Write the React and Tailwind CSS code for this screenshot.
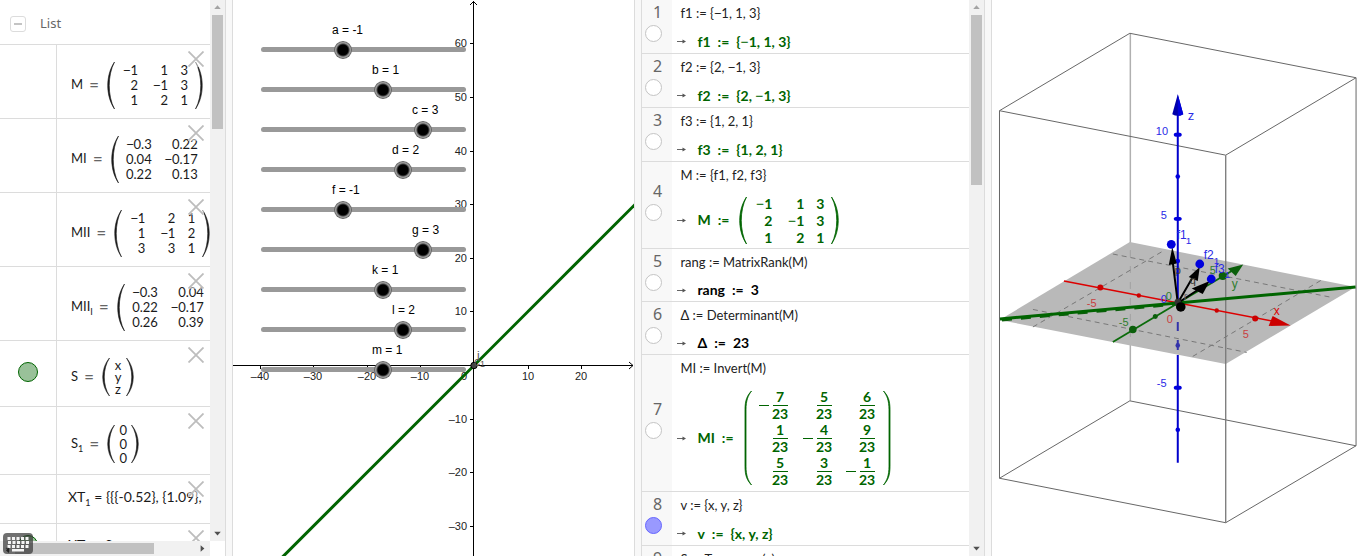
import React, { useState } from "react";

const MATH = "font-['Lato','Noto_Sans',sans-serif]";

/* ---------- shared pieces ---------- */

/* Sets minus signs in the wide form that formulas use. */
function Tex({ children }) {
  return String(children)
    .split(/([−])/)
    .map((part, i) =>
      part === "−" ? (
        <span key={i} className="font-['Noto_Sans',sans-serif] font-normal">
          {part}
        </span>
      ) : (
        part
      )
    );
}

function Paren({ side, height, thick, tall }) {
  const left = tall
    ? "M7.5 0 C3 5 1 10 1 20 V80 C1 90 3 95 7.5 100 C4 95 2 90 2 80 V20 C2 10 4 5 7.5 0 Z"
    : "M7.5 0 C-1.5 28 -1.5 72 7.5 100 C0.5 72 0.5 28 7.5 0 Z";
  return (
    <svg
      aria-hidden="true"
      viewBox="0 0 8 100"
      preserveAspectRatio="none"
      className={`w-2 shrink-0 overflow-visible ${height}`}
    >
      <path
        d={left}
        transform={side === "left" ? undefined : "matrix(-1 0 0 1 8 0)"}
        fill="currentColor"
        stroke="currentColor"
        strokeWidth={thick ? 0.8 : 0.6}
        vectorEffect="non-scaling-stroke"
      />
    </svg>
  );
}

function Matrix({
  rows,
  cols,
  row = "leading-[15px]",
  pad = "pr-[7px]",
  align = "text-right",
  height = "h-[47px]",
  thick,
  tall,
}) {
  return (
    <div className={`flex items-center ${thick ? "pl-[3px]" : ""}`}>
      <Paren side="left" height={height} thick={thick} tall={tall} />
      <div className={`grid ${cols} ${row} ${pad} ${align}`}>
        {rows.flat().map((cell, i) => (
          <span key={i}>{typeof cell === "string" ? <Tex>{cell}</Tex> : cell}</span>
        ))}
      </div>
      <Paren side="right" height={height} thick={thick} tall={tall} />
    </div>
  );
}

function Fraction({ num, den, negative }) {
  return (
    <span className="flex h-[33px] items-center justify-end gap-1">
      {negative && <span className="h-px w-[10px] bg-[#006400]" />}
      <span className="flex w-[15px] flex-col items-center">
        <span className="leading-4">{num}</span>
        <span className="h-px w-full bg-[#006400]" />
        <span className="leading-4">{den}</span>
      </span>
    </span>
  );
}

function Triangle({ dir, dark }) {
  const paths = {
    up: "M4.5 9.5 L8 5.5 L11.5 9.5 Z",
    down: "M4.5 6 L8 10 L11.5 6 Z",
    left: "M10 4.5 L6 8 L10 11.5 Z",
    right: "M6 4.5 L10 8 L6 11.5 Z",
  };
  return (
    <svg viewBox="0 0 16 16" aria-hidden="true" className="size-[15px]">
      <path d={paths[dir]} fill={dark ? "#505050" : "#a3a3a3"} />
    </svg>
  );
}

function VerticalScrollbar({ thumb }) {
  return (
    <div className="flex w-[15px] shrink-0 flex-col items-center bg-[#f1f1f1]">
      <button type="button" aria-label="Scroll up" className="h-[15px]">
        <Triangle dir="up" />
      </button>
      <div className="flex w-[11px] flex-1 flex-col">
        <div className={`${thumb} bg-[#c1c1c1]`} />
      </div>
      <button type="button" aria-label="Scroll down" className="h-[15px]">
        <Triangle dir="down" dark />
      </button>
    </div>
  );
}

/* ---------- algebra view ---------- */

function CloseButton() {
  return (
    <button type="button" aria-label="Delete" className="absolute top-[6px] right-[6px] bg-white/50">
      <svg viewBox="0 0 16 16" className="size-4" stroke="#bdbdbd" strokeWidth="1.8">
        <path d="M0.5 0.5 L15.5 15.5 M15.5 0.5 L0.5 15.5" />
      </svg>
    </button>
  );
}

function Sub({ children }) {
  return <span className="relative top-1 text-[9px]">{children}</span>;
}

function Definition({ name, children }) {
  return (
    <div className="flex items-center gap-[6px] pt-[7px] pl-[14px]">
      <span>{name}</span>
      <span className="w-[10px] text-center font-['Noto_Sans',sans-serif] text-base leading-4 text-[#666]">=</span>
      <div className="pl-[2px]">{children}</div>
    </div>
  );
}

const THREE = "grid-cols-[23px_30px_20px]";
const TWO = "grid-cols-[33px_46px]";

const algebraRows = [
  {
    id: "M",
    height: "h-[74px]",
    body: (
      <Definition name="M">
        <Matrix cols={THREE} rows={[["−1", "1", "3"], ["2", "−1", "3"], ["1", "2", "1"]]} />
      </Definition>
    ),
  },
  {
    id: "MI",
    height: "h-[74px]",
    body: (
      <Definition name="MI">
        <Matrix cols={TWO} pad="pr-4" rows={[["−0.3", "0.22"], ["0.04", "−0.17"], ["0.22", "0.13"]]} />
      </Definition>
    ),
  },
  {
    id: "MII",
    height: "h-[74px]",
    body: (
      <Definition name="MII">
        <Matrix cols={THREE} rows={[["−1", "2", "1"], ["1", "−1", "2"], ["3", "3", "1"]]} />
      </Definition>
    ),
  },
  {
    id: "MIII",
    height: "h-[74px]",
    body: (
      <Definition name={<>MII<Sub>I</Sub></>}>
        <Matrix cols={TWO} pad="pr-4" rows={[["−0.3", "0.04"], ["0.22", "−0.17"], ["0.26", "0.39"]]} />
      </Definition>
    ),
  },
  {
    id: "S",
    height: "h-[66px]",
    marble: true,
    body: (
      <Definition name="S">
        <Matrix
          cols="grid-cols-[16px]"
          row="leading-[12px]"
          pad=""
          align="text-center"
          height="h-[38px]"
          rows={[["x"], ["y"], ["z"]]}
        />
      </Definition>
    ),
  },
  {
    id: "S1",
    height: "h-[68px]",
    body: (
      <Definition name={<>S<Sub>1</Sub></>}>
        <Matrix
          cols="grid-cols-[16px]"
          row="leading-[14px]"
          pad=""
          align="text-center"
          height="h-[38px]"
          rows={[["0"], ["0"], ["0"]]}
        />
      </Definition>
    ),
  },
  {
    id: "XT1",
    height: "h-[49px]",
    body: (
      <div className="pb-1 pl-[11px] text-sm whitespace-nowrap">
        XT<Sub>1</Sub> = {"{{{-0.52}, {1.09},"}
      </div>
    ),
  },
  {
    id: "XT2",
    height: "h-[46px]",
    marble: true,
    body: (
      <div className="pb-1 pl-[11px] text-sm whitespace-nowrap">
        XT<Sub>2</Sub> = ?
      </div>
    ),
  },
];

function KeyboardButton() {
  const keys = [];
  for (let r = 0; r < 3; r++) for (let c = 0; c < 5; c++) keys.push([4.5 + c * 4.5 + (r === 1 ? 0.5 : 0), 4 + r * 4]);
  return (
    <button
      type="button"
      aria-label="Show keyboard"
      className="absolute bottom-[2px] left-[3px] rounded-[4px] bg-[#333]/70"
    >
      <svg viewBox="0 0 30 21" className="h-[21px] w-[30px]" fill="#f4f4f4">
        {keys.map(([x, y], i) => (
          <rect key={i} x={x} y={y} width="3" height="3" />
        ))}
        <rect x="9" y="16" width="12" height="2.5" />
        <path d="M6 14.5 L3 17.5 L6 20 Z" fill="#222" />
      </svg>
    </button>
  );
}

function AlgebraView() {
  return (
    <section className="relative flex w-[226px] shrink-0 border-r border-[#dcdcdc]">
      <div className="flex min-w-0 flex-1 flex-col">
        <div className="min-h-0 flex-1 overflow-hidden">
          <header className="flex h-[45px] items-center gap-[14px] border-b border-[#dcdcdc] pt-1 pl-[10px] font-['Noto_Sans','Open_Sans',sans-serif] text-[13px] text-[#666]">
            <button
              type="button"
              aria-label="Collapse list"
              className="flex size-4 items-center justify-center rounded-[3px] border border-[#dcdcdc]"
            >
              <span className="h-[2px] w-2 bg-[#c4c4c4]" />
            </button>
            <span>List</span>
          </header>
          {algebraRows.map((row) => (
            <div key={row.id} className={`flex border-b border-[#dcdcdc] ${row.height}`}>
              <div className="flex w-[57px] shrink-0 items-center justify-center border-r border-[#dcdcdc] pb-[3px]">
                {row.marble && (
                  <button
                    type="button"
                    aria-label="Toggle visibility"
                    className="size-5 rounded-full border border-[#006400] bg-[#99c199]"
                  />
                )}
              </div>
              <div
                className={`relative flex min-w-0 flex-1 items-center overflow-hidden text-[13px] text-[#1a1a1a] ${MATH}`}
              >
                {row.body}
                <CloseButton />
              </div>
            </div>
          ))}
        </div>
        <div className="flex h-[15px] shrink-0 items-center bg-[#f1f1f1]">
          <button type="button" aria-label="Scroll left">
            <Triangle dir="left" dark />
          </button>
          <div className="flex h-[11px] flex-1">
            <div className="w-[139px] bg-[#c1c1c1]" />
          </div>
          <button type="button" aria-label="Scroll right">
            <Triangle dir="right" dark />
          </button>
        </div>
      </div>
      <div className="flex pb-[15px]">
        <VerticalScrollbar thumb="h-[114px]" />
      </div>
      <KeyboardButton />
    </section>
  );
}

/* ---------- graphics view ---------- */

const sliderData = [
  ["a", -1],
  ["b", 1],
  ["c", 3],
  ["d", 2],
  ["f", -1],
  ["g", 3],
  ["k", 1],
  ["l", 2],
  ["m", 1],
];

function Slider({ name, start }) {
  const [value, setValue] = useState(start);
  const id = `slider-${name}`;
  return (
    <div className="flex h-10 w-[218px] flex-col gap-[2px]">
      <label
        htmlFor={id}
        className="leading-4 whitespace-nowrap"
        style={{ paddingLeft: -2 + (value + 5) * 20 }}
      >
        {name} = {value}
      </label>
      <div className="grid h-[19px] items-center">
        <span className="col-start-1 row-start-1 mr-[6px] ml-[7px] h-[5px] rounded-full bg-[#999]" />
        <input
          id={id}
          type="range"
          min="-5"
          max="5"
          step="1"
          value={value}
          onChange={(e) => setValue(Number(e.target.value))}
          className="z-10 col-start-1 row-start-1 m-0 h-[18px] w-full appearance-none bg-transparent [&::-webkit-slider-thumb]:size-[18px] [&::-webkit-slider-thumb]:appearance-none [&::-webkit-slider-thumb]:rounded-full [&::-webkit-slider-thumb]:bg-[radial-gradient(circle,#000_0,#000_5px,#444_6px,#999_7px,#999_7.5px,#666_8.5px,#777_9px)]"
        />
      </div>
    </div>
  );
}

function GraphicsView() {
  const xTicks = [-40, -30, -20, -10, 10, 20];
  const yTicks = [60, 50, 40, 30, 20, 10, -10, -20, -30];
  const text = (n) => String(n).replace("-", "–");
  return (
    <section className="relative min-w-0 grow-[403] basis-0 overflow-hidden border-x border-[#dcdcdc] font-['Liberation_Sans',Arial,sans-serif]">
      <svg className="absolute inset-0 size-full" aria-label="Plot of the line through the origin">
        <g fontSize="11" fill="#222">
          <path d="M0 365.5 H400 M240.5 1 V2000" stroke="#000" />
          <path d="M237 5 L240.5 1.5 L244 5 M396 362 L400 365.5 L396 369" stroke="#000" fill="none" />
          {xTicks.map((n) => {
            const x = Math.round(241 + n * 5.36);
            return (
              <g key={n}>
                <path d={`M${x + 0.5} 365 v4`} stroke="#000" />
                <text x={x} y="380" textAnchor="middle">
                  {text(n)}
                </text>
              </g>
            );
          })}
          {yTicks.map((n) => {
            const y = Math.round(365 - n * 5.36);
            return (
              <g key={n}>
                <path d={`M237 ${y + 0.5} h4`} stroke="#000" />
                <text x="234" y={y + 4} textAnchor="end">
                  {text(n)}
                </text>
              </g>
            );
          })}
          <text x="234" y="380" textAnchor="end">
            0
          </text>
          <path d="M-9 615.5 L440.5 166" stroke="#006400" strokeWidth="3" />
          <circle cx="241" cy="365.5" r="3.2" fill="#444" stroke="#000" />
          <text x="241" y="366" fontSize="12" fill="#555">
            c
          </text>
          <text x="244" y="360" fontSize="12" fill="#555">
            i
          </text>
          <text x="247" y="367" fontSize="9" fill="#555">
            1
          </text>
        </g>
      </svg>
      <div className="relative flex w-fit flex-col pt-[22px] pl-[21px] text-xs text-black">
        {sliderData.map(([name, start]) => (
          <Slider key={name} name={name} start={start} />
        ))}
      </div>
    </section>
  );
}

/* ---------- CAS view ---------- */

const casRows = [
  { n: 1, height: "h-[54px]", input: "f1 := {−1, 1, 3}", name: "f1", output: "{−1, 1, 3}" },
  { n: 2, height: "h-[54px]", input: "f2 := {2, −1, 3}", name: "f2", output: "{2, −1, 3}" },
  { n: 3, height: "h-[54px]", input: "f3 := {1, 2, 1}", name: "f3", output: "{1, 2, 1}" },
  {
    n: 4,
    height: "h-[87px]",
    input: "M := {f1, f2, f3}",
    name: "M",
    output: (
      <Matrix
        thick
        cols="grid-cols-[25px_32px_20px]"
        row="leading-[17px]"
        rows={[["−1", "1", "3"], ["2", "−1", "3"], ["1", "2", "1"]]}
      />
    ),
  },
  { n: 5, height: "h-[53px]", input: "rang := MatrixRank(M)", name: "rang", output: "3", dark: true },
  { n: 6, height: "h-[53px]", input: "Δ := Determinant(M)", name: "Δ", output: "23", dark: true },
  {
    n: 7,
    height: "h-[137px]",
    input: "MI := Invert(M)",
    name: "MI",
    output: (
      <Matrix
        thick
        tall
        cols="grid-cols-[36px_44px_43px]"
        pad="pr-2"
        height="h-[94px]"
        rows={[
          [<Fraction negative num="7" den="23" />, <Fraction num="5" den="23" />, <Fraction num="6" den="23" />],
          [<Fraction num="1" den="23" />, <Fraction negative num="4" den="23" />, <Fraction num="9" den="23" />],
          [<Fraction num="5" den="23" />, <Fraction num="3" den="23" />, <Fraction negative num="1" den="23" />],
        ]}
      />
    ),
  },
  { n: 8, height: "h-[54px]", input: "v := {x, y, z}", name: "v", output: "{x, y, z}", active: true },
  { n: 9, height: "h-[54px]", input: "S := Transpose(v)", name: "S", output: "{x, y, z}" },
];

function CasView() {
  return (
    <section className="flex w-[344px] shrink-0 border-x border-[#dcdcdc]">
      <div className="min-w-0 flex-1 overflow-hidden">
        {casRows.map((row) => (
          <div key={row.n} className={`flex border-b border-[#dcdcdc] ${row.height}`}>
            <div className="flex w-[30px] shrink-0 flex-col items-center justify-center gap-[2px] bg-[#f8f8f8] pb-[10px]">
              <span className="font-['Noto_Sans','Open_Sans',sans-serif] text-base leading-[22px] text-[#666]">
                {row.n}
              </span>
              <button
                type="button"
                aria-label={`Toggle row ${row.n}`}
                className={`mr-[7px] size-[17px] rounded-full border ${
                  row.active ? "border-[#6666ff] bg-[#9999ff]" : "border-[#c4c4c4] bg-white"
                }`}
              />
            </div>
            <div className={`flex min-w-0 flex-1 flex-col whitespace-nowrap ${MATH}`}>
              <div className="pl-2 text-[13px] leading-[27px] text-[#222]">
                <Tex>{row.input}</Tex>
              </div>
              <div
                className={`flex flex-1 items-center pt-[3px] pl-[5px] text-[14px] leading-4 font-bold ${
                  row.dark ? "text-black" : "text-[#006400]"
                }`}
              >
                <svg viewBox="0 0 9 7" aria-hidden="true" className="h-[7px] w-[9px]">
                  <path d="M0 3.5 H7" stroke="#666" />
                  <path d="M5.5 1.5 L9 3.5 L5.5 5.5 Z" fill="#555" />
                </svg>
                <span className="pl-[11px]">{row.name}</span>
                <span className="px-[7px]">:=</span>
                {typeof row.output === "string" ? (
                  <span>
                    <Tex>{row.output}</Tex>
                  </span>
                ) : (
                  row.output
                )}
              </div>
            </div>
          </div>
        ))}
      </div>
      <VerticalScrollbar thumb="h-[170px]" />
    </section>
  );
}

/* ---------- 3D view ---------- */

function SpaceView() {
  return (
    <section className="min-w-0 grow-[375] basis-0 overflow-hidden border-l border-[#dcdcdc]">
      <svg
        viewBox="992 0 374 556"
        className="size-full font-['Liberation_Sans',Arial,sans-serif]"
        aria-label="Vectors and plane in space"
      >
        <path d="M1130.5 33 V401" stroke="#b0b0b0" strokeWidth="1.5" />
        <path d="M1130 242 L1356 287 L1226 364 L999.5 320 Z" fill="#b9b9b9" />
        <path d="M1130.5 250 V344" stroke="#a2a2a2" strokeDasharray="7 9" />

        <g stroke="#777" strokeDasharray="5 4">
          <path d="M1033 309.5 L1247 352.5 M1113 254 L1330 297 M1033 327 L1165 250 M1193 356.5 L1322 280" />
        </g>

        <g stroke="#666" fill="none">
          <path d="M1130 33 L1356.5 77.5 L1226 155 L999.5 110.5 Z" />
          <path d="M1130 401 L1356.5 446 L1226 523 L999.5 478.5 Z" />
          <path d="M999.5 110.5 V478.5 M1356.5 77.5 V446" />
          <path d="M1226 155 V523" stroke="#777" strokeWidth="1.3" />
        </g>

        {/* x axis */}
        <g fill="#cc0000">
          <path d="M1064 281 L1275 321.5" stroke="#dd0000" strokeWidth="1.5" />
          <path d="M1273 316 L1291 325.5 L1269 326 Z" />
          <circle cx="1100.5" cy="287.5" r="3" />
          <circle cx="1139" cy="295.5" r="2.2" />
          <circle cx="1217" cy="310.5" r="2.2" />
          <circle cx="1255.5" cy="318.5" r="3" />
        </g>

        {/* y axis */}
        <g fill="#0b5f0b">
          <path d="M1113 342 L1232 271" stroke="#0b6b0b" strokeWidth="1.8" />
          <path d="M1228 268.5 L1243.5 264.5 L1236 276 Z" />
          <circle cx="1133" cy="329.5" r="3.8" />
          <circle cx="1155.5" cy="316.5" r="2.5" />
          <circle cx="1223" cy="276" r="4" />
        </g>

        {/* line in the plane */}
        <path d="M1002 320 L1178 304" stroke="#0b5f0b" strokeWidth="3" strokeDasharray="10 9" />
        <path d="M1000 319 L1356 287" stroke="#006400" strokeWidth="3" />

        {/* z axis */}
        <g fill="#0000dd">
          <path d="M1178 112 V303 M1178 355 V463" stroke="#0000cc" strokeWidth="2" />
          <path d="M1178 322 V331 M1178 340 V350" stroke="#3333aa" strokeWidth="2" />
          <path d="M1178 94 L1183.5 114 Q1178 117 1172.5 114 Z" fill="#0000aa" />
          <path d="M1178 94 L1183.5 114 Q1180 116 1178 115.5 Z" />
          <ellipse cx="1178" cy="134.5" rx="4" ry="2.2" />
          <circle cx="1178" cy="176.5" r="2.3" />
          <ellipse cx="1178" cy="218.8" rx="4" ry="2.2" />
          <circle cx="1178" cy="261" r="2.3" />
          <circle cx="1178" cy="345.5" r="2.3" fill="#3333aa" />
          <ellipse cx="1178" cy="387.8" rx="4" ry="2.2" />
          <circle cx="1178" cy="430" r="2.3" />
        </g>

        {/* vectors */}
        <g stroke="#000" strokeWidth="2">
          <path d="M1178 303 L1172.5 258 M1178 303 L1196 272 M1178 303 L1204 286" />
        </g>
        <path d="M1169 265 L1177 263.5 L1172.5 247 Z" />
        <path d="M1189 277 L1198 281 L1200 267 Z" />
        <path d="M1192 288.5 L1203 294 L1210 281 Z" />
        <circle cx="1178" cy="302" r="3.2" fill="#333" />
        <circle cx="1181" cy="307" r="4.8" />
        <g fill="#0000dd">
          <circle cx="1171.5" cy="244.3" r="4.4" />
          <circle cx="1200" cy="264" r="4.4" />
          <circle cx="1211.5" cy="279" r="4.4" />
        </g>

        <g fontSize="11">
          <g fill="#2a2ae6">
            <text x="1188" y="120" fontSize="13">z</text>
            <text x="1156" y="135">10</text>
            <text x="1161" y="219">5</text>
            <text x="1157" y="387">-5</text>
            <text x="1161" y="303">0</text>
            <g fontSize="12">
              <text x="1177" y="239">f1</text>
              <text x="1186" y="244" fontSize="10">1</text>
              <text x="1204" y="259">f2</text>
              <text x="1214" y="264" fontSize="10">1</text>
              <text x="1215" y="273">f3</text>
              <text x="1225" y="278" fontSize="10">1</text>
            </g>
          </g>
          <g fill="#c84040">
            <text x="1087" y="307">-5</text>
            <text x="1167" y="323">0</text>
            <text x="1243" y="338">5</text>
            <text x="1274" y="315" fontSize="12" fill="#dd0000">x</text>
          </g>
          <g fill="#2e7d2e">
            <text x="1119" y="326">-5</text>
            <text x="1210" y="274">5</text>
            <text x="1166" y="300">0</text>
            <text x="1232" y="288" fontSize="12">y</text>
          </g>
          <g fill="#333">
            <text x="1175" y="274">p</text>
            <text x="1190" y="284">q</text>
            <text x="1184" y="300" fill="#666">r</text>
          </g>
        </g>
      </svg>
    </section>
  );
}

export default function App() {
  return (
    <main className="flex h-screen min-w-[1000px] overflow-hidden bg-white pb-[2px]">
      <AlgebraView />
      <div className="w-[6px] shrink-0 bg-[#f8f8f8]" />
      <GraphicsView />
      <div className="w-[6px] shrink-0 bg-[#f8f8f8]" />
      <CasView />
      <div className="w-[6px] shrink-0 bg-[#f8f8f8]" />
      <SpaceView />
    </main>
  );
}
